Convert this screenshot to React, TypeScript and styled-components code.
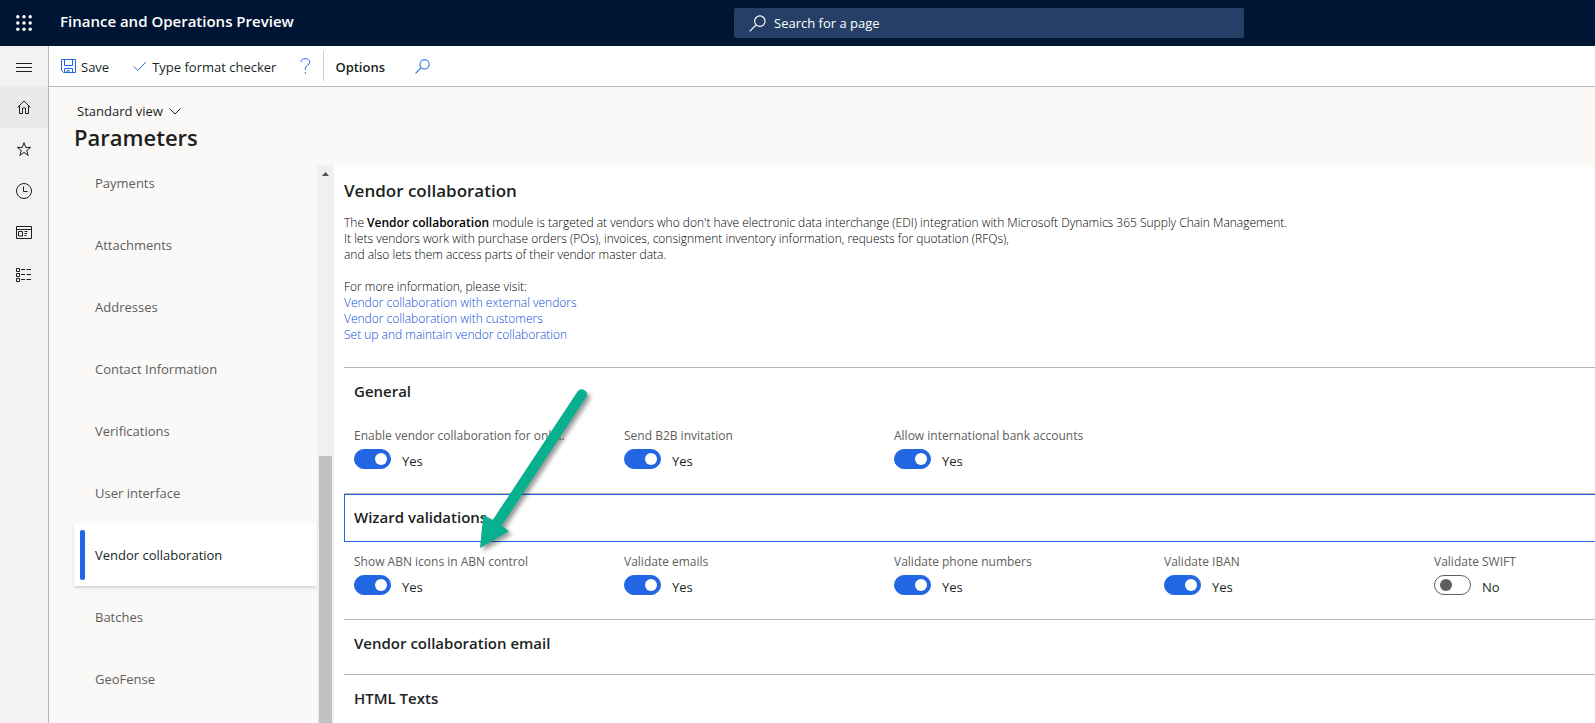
import React, { useState } from "react";
import styled, { createGlobalStyle, css } from "styled-components";

const color = {
  navy: "#001433",
  search: "#263f66",
  accent: "#2266e3",
  link: "#0a4fd8",
  ink: "#201f1e",
  muted: "#605e5c",
  line: "#b9b7b5",
  rail: "#f3f2f1",
  canvas: "#faf9f8",
};

const GlobalStyle = createGlobalStyle`
  *, *::before, *::after { box-sizing: border-box; }
  body { margin: 0; background: ${color.canvas}; color: ${color.ink}; }
  body, button, input { font-family: "Open Sans", "Noto Sans", sans-serif; font-size: 13px; line-height: 20px; }
  h1, h2, h3, p, ul { margin: 0; padding: 0; }
  svg { display: block; flex: none; }
`;

const plainButton = css`
  border: 0;
  padding: 0;
  background: none;
  color: inherit;
  display: flex;
  align-items: center;
  white-space: nowrap;
`;

const Shell = styled.div`
  display: flex;
  flex-direction: column;
  height: 100vh;
  overflow: hidden;
`;

const TopBar = styled.header`
  display: grid;
  grid-template-columns: 48px minmax(0, 1fr) 510px 351px;
  align-items: center;
  height: 46px;
  flex: none;
  background: ${color.navy};
  color: #fff;
`;

const Waffle = styled.button`
  ${plainButton}
  justify-content: center;
  height: 46px;
`;

const Brand = styled.div`
  padding: 0 12px 4px;
  font-size: 15px;
  font-weight: 600;
  white-space: nowrap;
`;

const SearchBox = styled.label`
  display: flex;
  align-items: center;
  gap: 8px;
  height: 30px;
  padding-left: 15px;
  border-radius: 2px;
  background: ${color.search};
`;

const SearchInput = styled.input`
  flex: 1;
  border: 0;
  padding: 0;
  outline: 0;
  background: none;
  color: #fff;
  &::placeholder { color: #fff; opacity: 1; }
`;

const Body = styled.div`
  display: flex;
  flex: 1;
  min-height: 0;
`;

const Rail = styled.nav`
  display: flex;
  flex-direction: column;
  width: 49px;
  flex: none;
  border-right: 1px solid ${color.line};
  background: ${color.rail};
`;

const RailButton = styled.button<{ $active?: boolean; $short?: boolean }>`
  ${plainButton}
  justify-content: center;
  height: ${(p) => (p.$short ? 40 : 42)}px;
  flex: none;
  background: ${(p) => (p.$active ? "#ebeae9" : "none")};
`;

const Main = styled.main`
  display: flex;
  flex-direction: column;
  flex: 1;
  min-width: 0;
`;

const Toolbar = styled.div`
  display: flex;
  align-items: center;
  height: 41px;
  flex: none;
  padding-left: 12px;
  border-bottom: 1px solid ${color.line};
  background: #fff;
`;

const ToolButton = styled.button<{ $strong?: boolean; $before?: number }>`
  ${plainButton}
  gap: 5px;
  margin-left: ${(p) => p.$before ?? 0}px;
  font-size: 13px;
  font-weight: ${(p) => (p.$strong ? 600 : 400)};
`;

const ToolText = styled.span`
  padding-top: 2px;
`;

const ToolDivider = styled.span`
  width: 1px;
  height: 30px;
  margin: 0 11px 0 12px;
  background: #d2d0ce;
`;

const PageHead = styled.div`
  display: flex;
  flex-direction: column;
  align-items: flex-start;
  height: 78px;
  flex: none;
  padding: 14px 24px 0;
`;

const ViewButton = styled.button`
  ${plainButton}
  gap: 6px;
  height: 20px;
  padding-left: 4px;
`;

const PageTitle = styled.h1`
  padding-left: 1px;
  font-size: 22px;
  line-height: 32px;
  font-weight: 600;
`;

const Columns = styled.div`
  display: flex;
  flex: 1;
  min-height: 0;
`;

const SideList = styled.div`
  width: 268px;
  flex: none;
  padding-left: 25px;
  overflow: hidden;
`;

const SideItems = styled.ul`
  margin-top: -13px;
  list-style: none;
`;

const SideButton = styled.button<{ $active?: boolean }>`
  ${plainButton}
  width: 100%;
  height: 62px;
  gap: 10px;
  padding-left: 6px;
  font-size: 13px;
  font-weight: ${(p) => (p.$active ? 500 : 400)};
  color: ${(p) => (p.$active ? color.ink : color.muted)};
  background: ${(p) => (p.$active ? "#fff" : "none")};
  box-shadow: ${(p) => (p.$active ? "0 2px 3px rgba(0, 0, 0, 0.14)" : "none")};
  &::before {
    content: "";
    width: 5px;
    height: 50px;
    border-radius: 2px;
    background: ${(p) => (p.$active ? color.accent : "transparent")};
  }
`;

const ScrollTrack = styled.div`
  display: flex;
  flex-direction: column;
  align-items: center;
  width: 17px;
  flex: none;
  padding-top: 7px;
  background: #f0f0f0;
`;

const ScrollThumb = styled.div`
  width: 13px;
  flex: 1;
  margin-top: 280px;
  background: #c1c1c1;
`;

const Panel = styled.div`
  position: relative;
  flex: 1;
  min-width: 0;
  margin-top: 2px;
  padding: 14px 0 0 10px;
  overflow: hidden;
  background: #fff;
`;

const PanelTitle = styled.h2`
  font-size: 17px;
  line-height: 20px;
  font-weight: 600;
`;

const Intro = styled.div`
  padding: 14px 0 24px;
  color: #000;
  font-size: 12px;
  font-weight: 300;
  line-height: 16px;
  p + p { margin-top: 16px; }
  b { font-weight: 600; }
`;

const InfoLink = styled.a`
  display: table;
  color: ${color.link};
  text-decoration: none;
`;

const SectionBox = styled.section`
  padding-bottom: 6px;
  border-top: 1px solid ${color.line};
`;

const SectionHead = styled.button<{ $focused?: boolean }>`
  ${plainButton}
  width: 100%;
  height: 48px;
  padding: 0 9px 2px;
  border: 1px solid ${(p) => (p.$focused ? color.accent : "transparent")};
  border-right: 0;
  font-size: 15px;
  font-weight: 600;
`;

const Fields = styled.div`
  display: flex;
  height: 71px;
  padding: 12px 0 0 10px;
`;

const Field = styled.label`
  width: 270px;
  flex: none;
  padding-right: 40px;
`;

const FieldLabel = styled.span`
  display: block;
  margin-bottom: 5px;
  overflow: hidden;
  color: ${color.muted};
  font-size: 12px;
  line-height: 16px;
  white-space: nowrap;
  text-overflow: ellipsis;
`;

const SwitchRow = styled.span`
  display: flex;
  align-items: flex-start;
  gap: 11px;
`;

const Switch = styled.input`
  appearance: none;
  display: flex;
  align-items: center;
  width: 37px;
  height: 20px;
  margin: 0;
  padding: 0 5px;
  border: 1px solid ${color.muted};
  border-radius: 10px;
  background: #fff;
  &::before {
    content: "";
    width: 12px;
    height: 12px;
    border-radius: 50%;
    background: ${color.muted};
  }
  &:checked {
    justify-content: flex-end;
    padding: 0 3px;
    border-color: ${color.accent};
    background: ${color.accent};
  }
  &:checked::before { background: #fff; }
`;

const SwitchValue = styled.span`
  padding-top: 2px;
`;

const Pointer = styled.svg`
  position: absolute;
  left: 136px;
  top: 217px;
  pointer-events: none;
  filter: drop-shadow(3px 3px 2px rgba(0, 0, 0, 0.4));
`;

type IconProps = { size?: number; stroke?: string; children: React.ReactNode };
const Icon = ({ size = 16, stroke = color.ink, children }: IconProps) => (
  <svg width={size} height={size} viewBox={`0 0 ${size} ${size}`} fill="none" stroke={stroke} strokeWidth="1" aria-hidden="true">
    {children}
  </svg>
);

const Magnifier = ({ stroke, size = 16 }: { stroke: string; size?: number }) => (
  <svg width={size} height={size} viewBox="0 0 16 16" fill="none" stroke={stroke} strokeWidth="1.1" aria-hidden="true">
    <circle cx="10.2" cy="5.8" r="4.9" />
    <path d="M6.7 9.3 0.6 15.4" />
  </svg>
);

const railItems = [
  { name: "Home", art: <path d="M1.500 8.500 8 2l6.500 6.500M3.500 7v7.500h3V9h3v5.500h3V7" /> },
  { name: "Favorites", art: <path d="M8 1.500 9.700 6.400h5l-4 3.100 1.500 5L8 11.400l-4.200 3.100 1.500-5-4-3.100h5z" /> },
  { name: "Recent", art: <><circle cx="8" cy="8" r="7.500" /><path d="M7.500 3.500v5h4" /></> },
  { name: "Workspaces", art: <path d="M.5 1.500h15v12H.5zM.5 4.500h15M2.500 6.500h4V11h-4zM8.500 6.500h3M8.500 8.500h2.500M8.500 10.500h2" /> },
  { name: "Modules", art: <path d="M.5 1.500h3v3h-3zM.5 6.500h3v3h-3zM.5 11.500h3v3h-3zM5 2.500h4M10.500 2.500h4.500M5 7.500h4M10.500 7.500h4.500M5 12.500h4M10.500 12.500h4.500" /> },
];

const tabs = [
  "Payments",
  "Attachments",
  "Addresses",
  "Contact Information",
  "Verifications",
  "User interface",
  "Vendor collaboration",
  "Batches",
  "GeoFense",
];

const SwitchField = ({ label, on }: { label: string; on: boolean }) => {
  const [checked, setChecked] = useState(on);
  return (
    <Field>
      <FieldLabel>{label}</FieldLabel>
      <SwitchRow>
        <Switch type="checkbox" role="switch" checked={checked} onChange={(e) => setChecked(e.target.checked)} />
        <SwitchValue>{checked ? "Yes" : "No"}</SwitchValue>
      </SwitchRow>
    </Field>
  );
};

type SectionProps = { title: string; focused?: boolean; fields?: [string, boolean][] };
const Section = ({ title, focused, fields }: SectionProps) => (
  <SectionBox>
    <h3>
      <SectionHead type="button" $focused={focused} aria-expanded={!!fields}>{title}</SectionHead>
    </h3>
    {fields && (
      <Fields>
        {fields.map(([label, on]) => <SwitchField key={label} label={label} on={on} />)}
      </Fields>
    )}
  </SectionBox>
);

export default function App() {
  const [tab, setTab] = useState("Vendor collaboration");
  return (
    <Shell>
      <GlobalStyle />
      <TopBar>
        <Waffle type="button" aria-label="App launcher">
          <svg width="16" height="16" viewBox="0 0 16 16" fill="#fff" aria-hidden="true">
            {[1.8, 8, 14.2].map((y) => [1.8, 8, 14.2].map((x) => <circle key={`${x}-${y}`} cx={x} cy={y} r="1.700" />))}
          </svg>
        </Waffle>
        <Brand>Finance and Operations Preview</Brand>
        <SearchBox>
          <Magnifier stroke="#fff" size={17} />
          <SearchInput type="search" aria-label="Search for a page" placeholder="Search for a page" />
        </SearchBox>
      </TopBar>
      <Body>
        <Rail aria-label="Main">
          <RailButton type="button" $short aria-label="Expand the navigation pane">
            <Icon><path d="M0 5.500h16M0 9.500h16M0 13.500h16" /></Icon>
          </RailButton>
          {railItems.map(({ name, art }) => (
            <RailButton key={name} type="button" $active={name === "Home"} aria-label={name}>
              <Icon>{art}</Icon>
            </RailButton>
          ))}
        </Rail>
        <Main>
          <Toolbar>
            <ToolButton type="button">
              <Icon size={15} stroke={color.accent}>
                <path d="M.5.500h14v13H2.500l-2-2zM3.500.500v6h8v-6M3.500 13.500v-4h8v4M6 13.500v-2h2v2" />
              </Icon>
              <ToolText>Save</ToolText>
            </ToolButton>
            <ToolButton type="button" $before={24}>
              <Icon size={14} stroke={color.accent}><path d="M.8 7.500l4 4 8-8.500" /></Icon>
              <ToolText>Type format checker</ToolText>
            </ToolButton>
            <ToolButton type="button" $before={24} aria-label="Help">
              <svg width="11" height="16" viewBox="0 0 11 16" fill="none" stroke={color.accent} aria-hidden="true">
                <path d="M1 4C1 1.800 2.800.6 5.200.6S9.700 2 9.700 4.200C9.700 7 5.300 7.600 5.300 10.500v1.500" />
                <path d="M5.300 14v1.500" />
              </svg>
            </ToolButton>
            <ToolDivider />
            <ToolButton type="button" $strong><ToolText>Options</ToolText></ToolButton>
            <ToolButton type="button" $before={30} aria-label="Search actions">
              <Magnifier stroke={color.accent} size={15} />
            </ToolButton>
          </Toolbar>
          <PageHead>
            <ViewButton type="button">
              Standard view
              <svg width="12" height="7" viewBox="0 0 12 7" fill="none" stroke={color.ink} aria-hidden="true">
                <path d="M.5.5 6 6 11.500.5" />
              </svg>
            </ViewButton>
            <PageTitle>Parameters</PageTitle>
          </PageHead>
          <Columns>
            <SideList>
              <SideItems>
                {tabs.map((name) => (
                  <li key={name}>
                    <SideButton type="button" $active={name === tab} onClick={() => setTab(name)}>{name}</SideButton>
                  </li>
                ))}
              </SideItems>
            </SideList>
            <ScrollTrack aria-hidden="true">
              <svg width="7" height="4" viewBox="0 0 7 4" fill="#505050"><path d="M0 4 3.500 0 7 4z" /></svg>
              <ScrollThumb />
            </ScrollTrack>
            <Panel>
              <PanelTitle>Vendor collaboration</PanelTitle>
              <Intro>
                <p>
                  The <b>Vendor collaboration</b> module is targeted at vendors who don't have electronic data interchange (EDI) integration with Microsoft Dynamics 365 Supply Chain Management.
                  <br />
                  It lets vendors work with purchase orders (POs), invoices, consignment inventory information, requests for quotation (RFQs),
                  <br />
                  and also lets them access parts of their vendor master data.
                </p>
                <p>For more information, please visit:</p>
                <InfoLink href="#external">Vendor collaboration with external vendors</InfoLink>
                <InfoLink href="#customers">Vendor collaboration with customers</InfoLink>
                <InfoLink href="#setup">Set up and maintain vendor collaboration</InfoLink>
              </Intro>
              <Section
                title="General"
                fields={[
                  ["Enable vendor collaboration for onb…", true],
                  ["Send B2B invitation", true],
                  ["Allow international bank accounts", true],
                ]}
              />
              <Section
                title="Wizard validations"
                focused
                fields={[
                  ["Show ABN icons in ABN control", true],
                  ["Validate emails", true],
                  ["Validate phone numbers", true],
                  ["Validate IBAN", true],
                  ["Validate SWIFT", false],
                ]}
              />
              <Section title="Vendor collaboration email" />
              <Section title="HTML Texts" />
              <Pointer width="124" height="170" viewBox="470 384 124 170" aria-hidden="true">
                <path d="M577.700 391.200A5.200 5.200 0 0 1 586.300 396.900L501.700 525.700 509 531.300 480 548 483.300 515 492.700 520z" fill="#08b090" />
              </Pointer>
            </Panel>
          </Columns>
        </Main>
      </Body>
    </Shell>
  );
}
